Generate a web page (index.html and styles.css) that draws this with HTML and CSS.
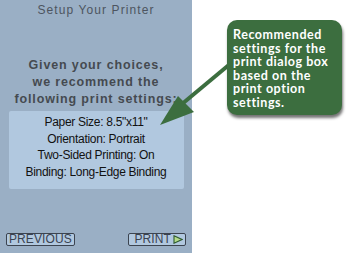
FILE: index.html
```html
<!DOCTYPE html>
<html>
<head>
<meta charset="utf-8">
<link rel="stylesheet" href="styles.css">
</head>
<body>
<div class="stage">
  <div class="panel">
    <div class="title">Setup Your Printer</div>
    <div class="intro">Given your choices,<br>we recommend the<br>following print settings:</div>
    <div class="settings">
      <div>Paper Size: 8.5"x11"</div>
      <div>Orientation: Portrait</div>
      <div>Two-Sided Printing: On</div>
      <div>Binding: Long-Edge Binding</div>
    </div>
    <div class="buttons">
      <span class="btn">PREVIOUS</span>
      <span class="btn print">PRINT<svg class="tri" width="10" height="9" viewBox="0 0 10 9"><polygon points="1,0.8 9,4.5 1,8.2" fill="#b5dc8a" stroke="#2f5a2f" stroke-width="1.1"/></svg></span>
    </div>
  </div>
  <svg class="arrow" width="352" height="253" viewBox="0 0 352 253">
    <line x1="230" y1="64" x2="176" y2="109" stroke="#3c6e3f" stroke-width="4"/>
    <polygon points="160,125 178,96 194,112" fill="#3c6e3f"/>
  </svg>
  <div class="callout">Recommended settings for the print dialog box based on the print option settings.</div>
</div>
</body>
</html>
```
FILE: styles.css
```css
html, body {
  margin: 0;
  padding: 0;
  background: #fff;
}
.stage {
  position: relative;
  width: 352px;
  height: 253px;
  overflow: hidden;
}
.panel {
  width: 192px;
  height: 253px;
  background: #9aafc5;
  display: flex;
  flex-direction: column;
  align-items: center;
  font-family: "Liberation Sans", Arial, sans-serif;
}
.title {
  margin-top: 2px;
  font-size: 12px;
  line-height: 16px;
  letter-spacing: 1.1px;
  color: #4d5560;
}
.intro {
  margin-top: 39px;
  text-align: center;
  font-size: 12.5px;
  font-weight: bold;
  line-height: 17px;
  letter-spacing: 0.85px;
  color: #454a50;
}
.settings {
  margin-top: 3px;
  width: 175px;
  height: 78px;
  box-sizing: border-box;
  padding-top: 3px;
  background: #b1c8df;
  border-radius: 2px;
  text-align: center;
  font-size: 12px;
  line-height: 16.5px;
  letter-spacing: -0.3px;
  color: #111;
}
.buttons {
  margin-top: auto;
  margin-bottom: 7px;
  width: 180px;
  display: flex;
  justify-content: space-between;
}
.btn {
  display: inline-flex;
  align-items: center;
  height: 13px;
  box-sizing: border-box;
  border: 1px solid #3c4450;
  border-radius: 2px;
  background: #b1c8df;
  font-size: 12px;
  line-height: 11px;
  color: #3a4250;
  padding: 0 2px;
  letter-spacing: 0.1px;
}
.btn.print {
  width: 58px;
  justify-content: flex-end;
  padding-right: 2px;
  gap: 2px;
}
.tri {
  display: block;
}
.arrow {
  position: absolute;
  left: 0;
  top: 0;
}
.callout {
  position: absolute;
  left: 227px;
  top: 20px;
  width: 115px;
  height: 95px;
  box-sizing: border-box;
  padding: 8px 3px 0 6px;
  background: #3c6e3f;
  border-radius: 10px;
  box-shadow: 1px 3px 3px rgba(0, 0, 0, 0.55);
  color: #fff;
  font-family: "Lato", "DejaVu Sans", sans-serif;
  font-weight: bold;
  font-size: 12.5px;
  line-height: 13.6px;
  letter-spacing: 0.55px;
}
```
